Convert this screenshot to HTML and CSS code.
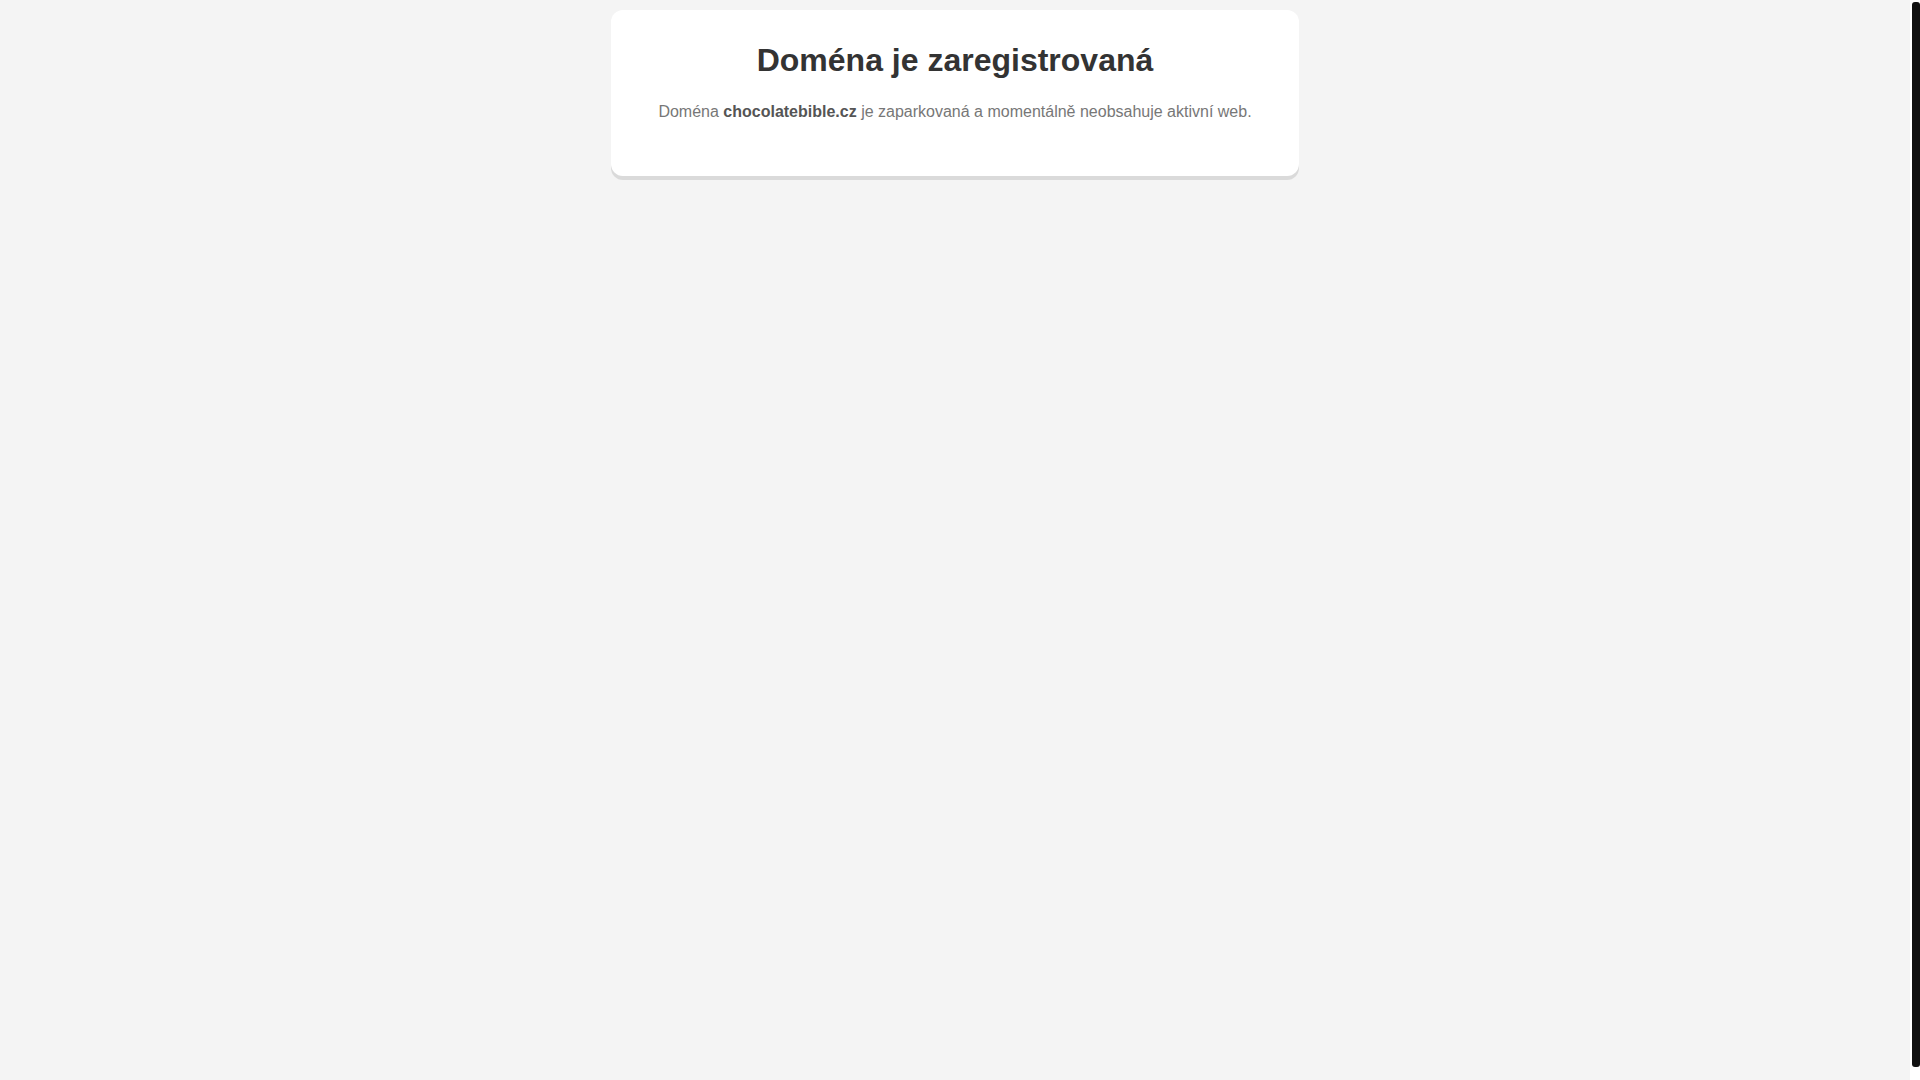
FILE: index.html
```html
<!DOCTYPE html>
<html lang="cs">
<head>
    <meta charset="UTF-8">
    <meta name="viewport" content="width=device-width, initial-scale=1.0">
    <title>chocolatebible.cz</title>
    <link rel="stylesheet" href="styles.css">
</head>
<body>
    <div class="box">
        <h1 class="title">Doména je zaregistrovaná</h1>
        <p class="des">Doména <strong>chocolatebible.cz</strong> je zaparkovaná a momentálně neobsahuje aktivní web.</p>
    </div>
    <div class="scrollbar"><div class="thumb"></div></div>
</body>
</html>
```

FILE: styles.css
```css
* {
    margin: 0;
    padding: 0;
    box-sizing: border-box;
}

html {
    background-color: #f4f4f4;
}
body {
    height: 100vh;
    overflow: hidden;
    padding: 10px 10px 0 0;
    font-family: "Liberation Sans", Arial, sans-serif;
    background-color: #f4f4f4;
}

/* page scrollbar */
.scrollbar {
    position: fixed;
    top: 0;
    right: 0;
    width: 10px;
    height: 100%;
    padding: 2px 0 13px 2px;
    background-color: #fff;
}
.scrollbar .thumb {
    height: 100%;
    background-color: #111;
    border-radius: 3px;
}

.box {
    max-width: 688px;
    margin: 0 auto;
    padding: 32px 24px;
    background-color: #fff;
    border-radius: 12px;
    box-shadow: 0 4px 0 #dadada;
    text-align: center;
}
.box .title {
    font-size: 32px;
    line-height: 37px;
    font-weight: bold;
    color: #333;
    margin-bottom: 24px;
}
.box .des {
    font-size: 16px;
    line-height: 18px;
    color: #777;
    margin-bottom: 23px;
}
.box .des strong {
    color: #555;
}
```
